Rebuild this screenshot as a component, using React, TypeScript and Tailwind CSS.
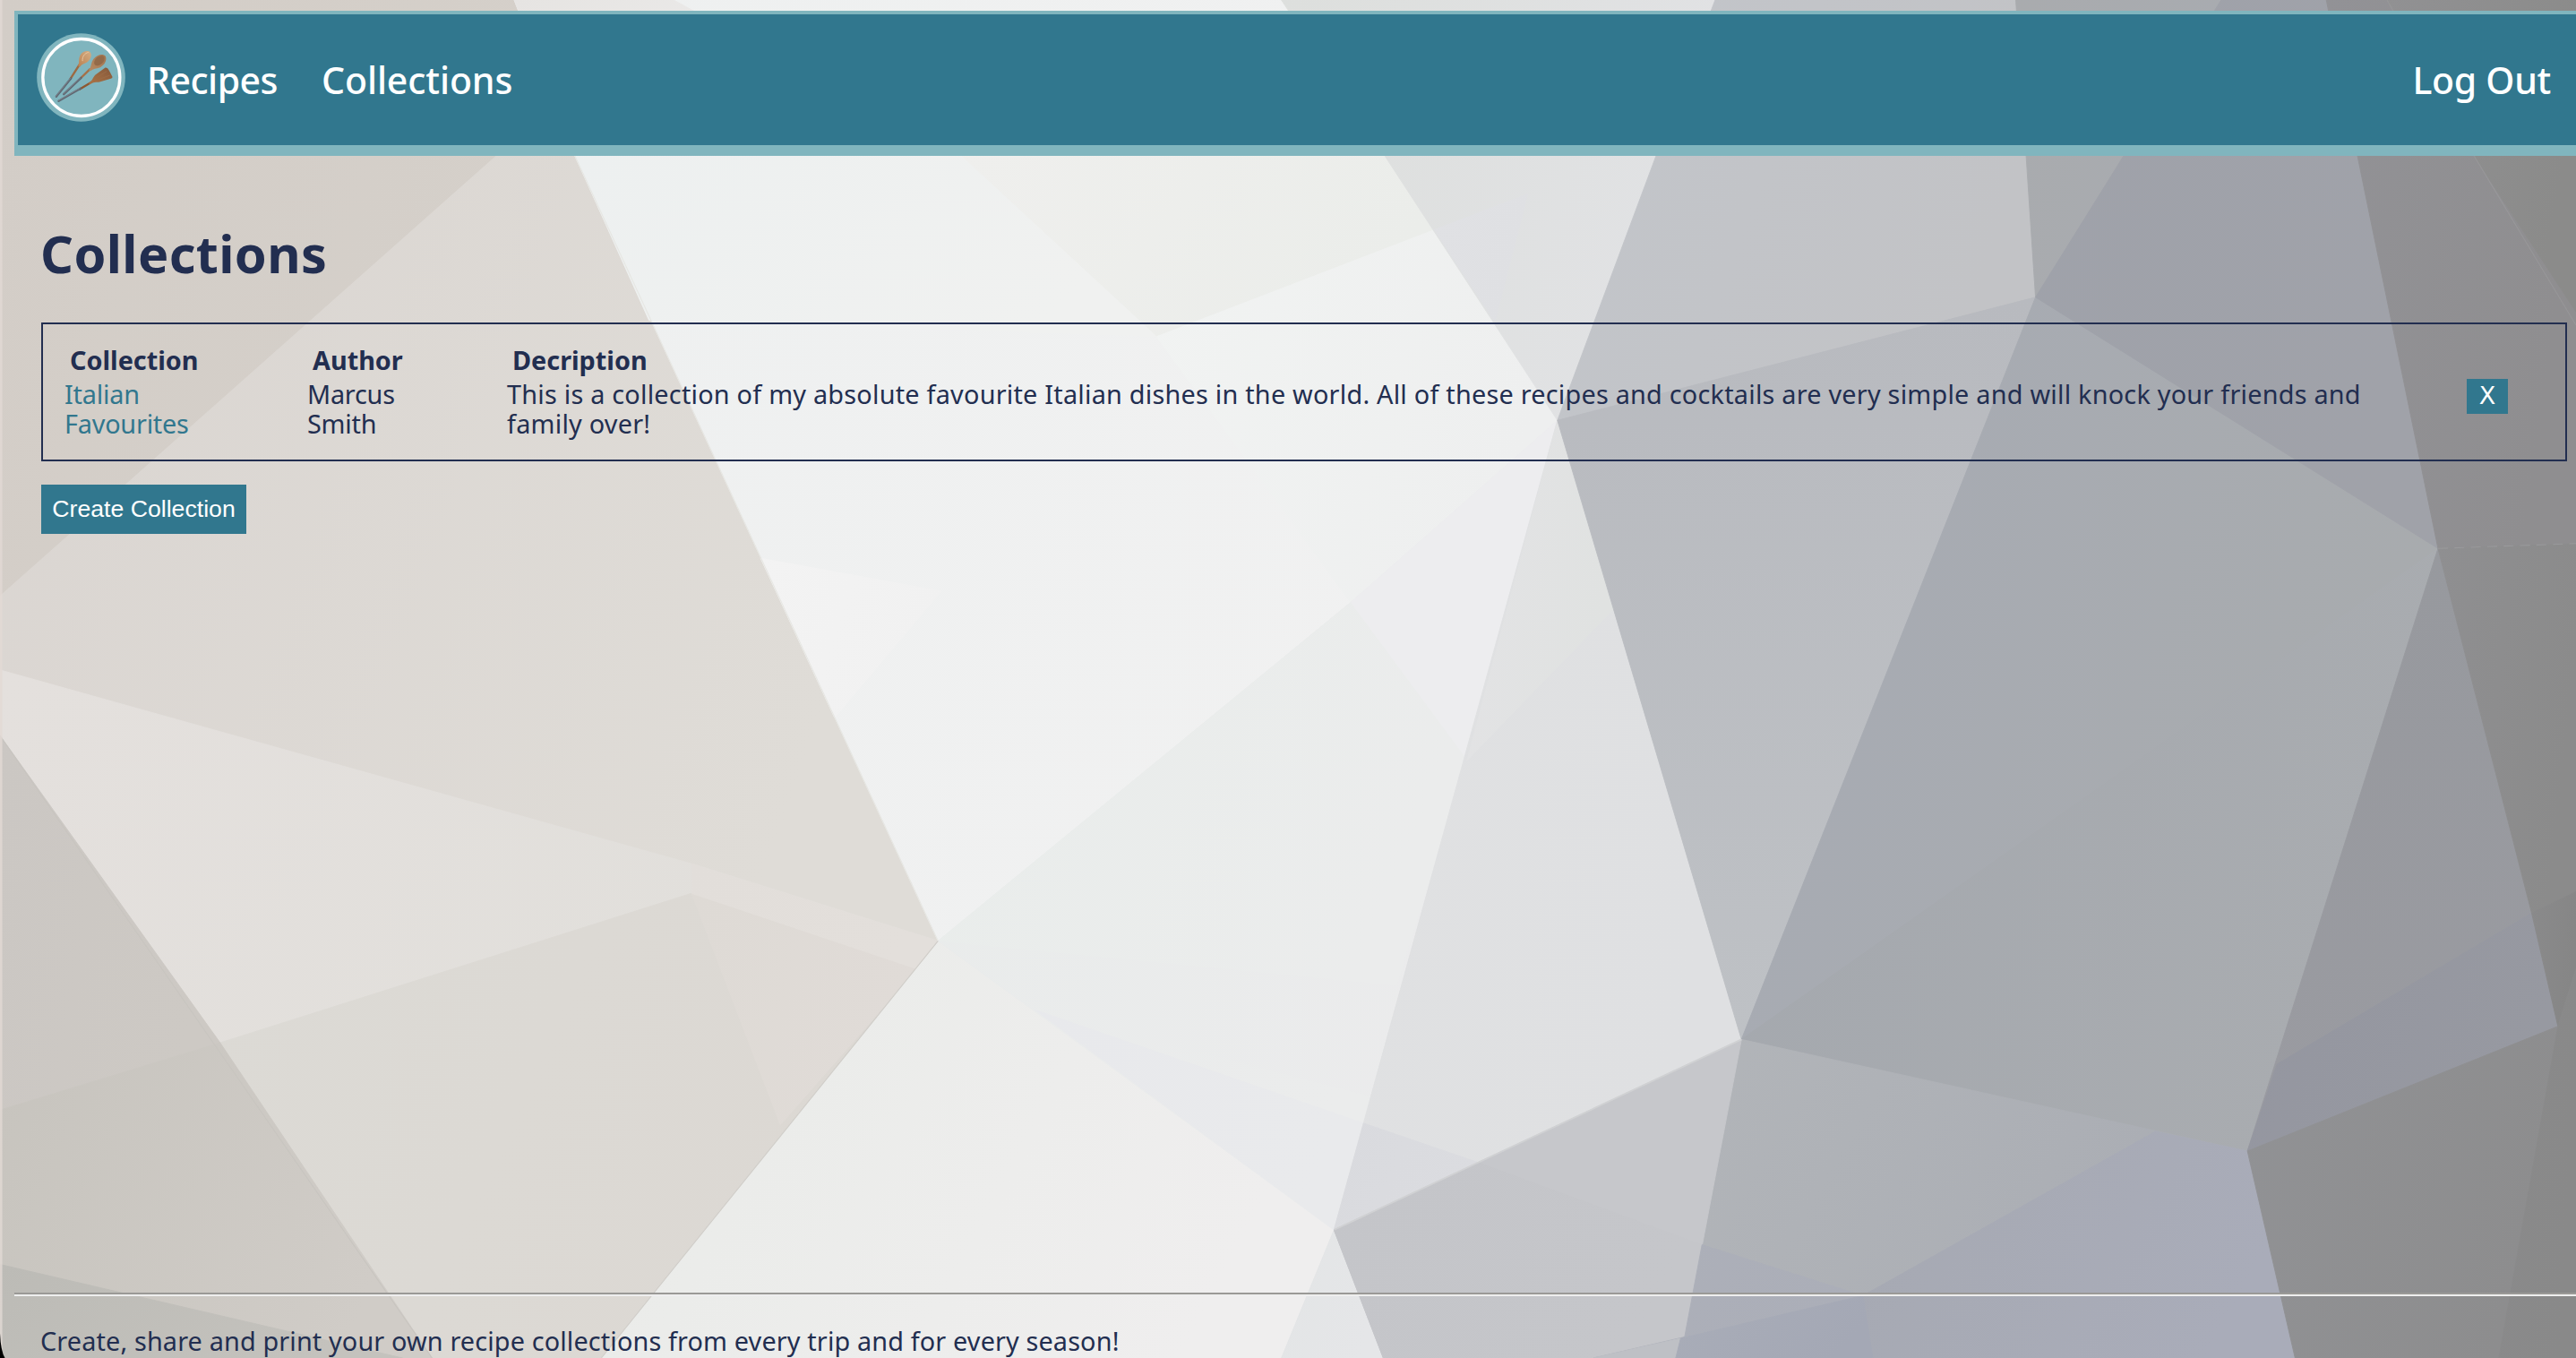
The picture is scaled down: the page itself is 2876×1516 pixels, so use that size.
type Facet = { points: string; from: string; to: string; dir?: "h" | "v" };

const facets: Facet[] = [
  // warm left side
  { points: "0,0 313,0 350,95 302,95 0,363", from: "#d3cdc7", to: "#d5d0ca" },
  { points: "302,95 350,95 571,573 421,526 0,408 0,363", from: "#dad5d1", to: "#dfdcd7" },
  { points: "0,408 421,526 571,573 558,592 421,544 134,635 0,448", from: "#e4e0dd", to: "#e1dfdb" },
  { points: "421,544 571,573 372,827 263,827 134,635", from: "#dcdad5", to: "#dcd8d3" },
  { points: "421,544 560,588 475,685", from: "#dedad5", to: "#e0dbd7" },
  { points: "421,526 571,573 558,590 421,544", from: "#e2deda", to: "#e3dfdb" },
  { points: "0,448 134,635 0,676", from: "#cbc7c3", to: "#cdc9c4" },
  { points: "0,676 134,635 263,827 0,827", from: "#c7c4be", to: "#d0ccc7" },
  { points: "0,770 245,827 0,827", from: "#bcbbb6", to: "#c4c2bd" },
  // bright centre
  { points: "313,0 1044,0 1008,95 948,256 822,367 571,573 350,95", from: "#eef0f0", to: "#f1f1f1" },
  { points: "313,0 410,0 585,95 350,95", from: "#e6e4e2", to: "#efefef" },
  { points: "585,95 843,95 873,140 704,205", from: "#efefed", to: "#ebedea" },
  { points: "704,205 873,140 948,256 822,367", from: "#f1f3f2", to: "#eeefef" },
  { points: "350,95 585,95 704,205 395,195", from: "#edf0f0", to: "#f0f1f0" },
  { points: "463,340 573,360 508,437", from: "#f3f3f3", to: "#f1f1f1" },
  { points: "571,573 822,367 948,256 812,749", from: "#e9eceb", to: "#ebebec" },
  { points: "822,367 948,256 893,463", from: "#ededef", to: "#ededef" },
  { points: "571,573 822,367 893,463 850,600", from: "#e9edeb", to: "#ebecec" },
  { points: "571,573 812,749 780,827 366,827", from: "#e9ebe8", to: "#efeeee" },
  { points: "571,573 630,615 835,668 812,749", from: "#e9ebeb", to: "#ebecec" },
  { points: "630,615 830,684 812,749", from: "#e8e9ec", to: "#e9eaec" },
  { points: "812,749 842,827 780,827", from: "#e3e5e6", to: "#e5e6e8" },
  { points: "843,95 780,0 1044,0 1008,95 948,256", from: "#dddfdd", to: "#e1e2e4" },
  { points: "873,140 930,118 910,196", from: "#e0e1e4", to: "#dfe0e3" },
  { points: "948,256 1060,633 812,749", from: "#e0e1e2", to: "#dfe0e2" },
  { points: "948,256 983,370 893,463", from: "#e3e3e5", to: "#e0e2e1" },
  { points: "830,684 900,708 812,749", from: "#d9dade", to: "#dbdce0" },
  // cool greys
  { points: "1044,0 1227,0 1234,95 1239,181 948,256 1008,95", from: "#c2c5ca", to: "#c2c3c6" },
  { points: "1227,0 1334,0 1352,0 1292,95 1239,181", from: "#a9abae", to: "#a8abb0" },
  { points: "948,256 1239,181 1060,633", from: "#b8babf", to: "#bec1c5", dir: "v" },
  { points: "1239,181 1484,334 1060,633", from: "#a7abb4", to: "#a8abae" },
  { points: "1239,181 1352,0 1416,0 1435,95 1484,334", from: "#9fa2aa", to: "#a0a2a9" },
  { points: "1060,633 1484,334 1368,701", from: "#a4a8ae", to: "#a9acb0" },
  { points: "1060,633 1368,701 1397,827 1023,827", from: "#b2b5b9", to: "#a9acb3" },
  { points: "1134,789 1312,689 1368,701 1397,827 1140,827", from: "#a6a9b2", to: "#a9acb9" },
  { points: "812,749 1060,633 1023,827 842,827", from: "#c6c7cb", to: "#c6c7cb" },
  { points: "812,749 900,708 1036,758 1023,827 842,827", from: "#c4c5c9", to: "#c5c6ca" },
  { points: "1036,758 1134,789 970,827 1023,827", from: "#adb0b9", to: "#abaeb8" },
  { points: "970,827 1023,815 1023,827", from: "#bec0c5", to: "#bec0c5" },
  { points: "1023,815 1134,789 1140,827 1020,827", from: "#a9adb8", to: "#a4a8b5" },
  // dark right edge
  { points: "1416,0 1568,0 1568,331 1484,334 1435,95", from: "#929296", to: "#8f8e90" },
  { points: "1453,0 1568,0 1568,190 1506,95", from: "#919193", to: "#8b8b8a" },
  { points: "1484,334 1541,556 1557,625 1368,701", from: "#97999e", to: "#9a9ba1", dir: "v" },
  { points: "1386,648 1541,556 1557,625 1368,701", from: "#9496a0", to: "#9799a1" },
  { points: "1484,334 1568,331 1568,543 1541,556", from: "#8f8f91", to: "#8b8b8b" },
  { points: "1541,556 1568,543 1568,590 1557,625", from: "#8a8a8b", to: "#868686" },
  { points: "1368,701 1557,625 1521,827 1397,827", from: "#919295", to: "#8d8d8e" },
  { points: "1557,625 1568,590 1568,827 1521,827", from: "#8a8a8b", to: "#898989" },
];

function Backdrop() {
  return (
    <svg className="absolute inset-0 h-full w-full" viewBox="0 0 1568 827" preserveAspectRatio="none" aria-hidden="true">
      <defs>
        {facets.map((f, i) => (
          <linearGradient key={i} id={`facet-${i}`} x1="0" y1="0" x2={f.dir === "v" ? "0" : "1"} y2={f.dir === "v" ? "1" : "0.3"}>
            <stop offset="0" stopColor={f.from} />
            <stop offset="1" stopColor={f.to} />
          </linearGradient>
        ))}
      </defs>
      <rect width="780" height="827" fill="#dcdad6" />
      <rect x="780" width="788" height="827" fill="#a4a5a9" />
      {facets.map((f, i) => (
        <polygon key={i} points={f.points} fill={`url(#facet-${i})`} stroke={`url(#facet-${i})`} strokeWidth="0.5" />
      ))}
      <g fill="none" strokeWidth="0.6">
        <path d="M571 573L366 827" stroke="#cfccc7" />
        <path d="M350 95L571 573" stroke="#e6e6e2" />
        <path d="M1060 633L812 749" stroke="#d0d1d3" strokeWidth="1" />
        <path d="M0 448L263 827" stroke="#c8c5c0" />
        <path d="M1484 334L1568 331" stroke="#99999b" strokeDasharray="6 4" />
        <path d="M1453 0L1506 95L1568 198" stroke="#9c9c9e" strokeOpacity="0.6" />
        <path d="M0.7 0V827" stroke="#e2d9d4" strokeWidth="1.4" strokeOpacity="0.8" />
      </g>
      <path d="M0 812Q0.5 823 3 827H0Z" fill="#000" />
    </svg>
  );
}

function Logo() {
  return (
    <svg className="mb-1.5 size-[99px]" viewBox="31.5 34.5 297 297" role="img" aria-label="Wooden spoons">
      <defs>
        <linearGradient id="wood-a" x1="1" y1="0" x2="0" y2="1">
          <stop offset="0" stopColor="#d6ae84" />
          <stop offset="1" stopColor="#b98152" />
        </linearGradient>
        <linearGradient id="wood-b" x1="1" y1="0" x2="0" y2="1">
          <stop offset="0" stopColor="#a0744f" />
          <stop offset="1" stopColor="#b88a62" />
        </linearGradient>
        <linearGradient id="wood-c" x1="1" y1="0" x2="0" y2="1">
          <stop offset="0" stopColor="#84583a" />
          <stop offset="1" stopColor="#ac7446" />
        </linearGradient>
      </defs>
      <circle cx="180" cy="183" r="148" fill="#80b5be" />
      <circle cx="181" cy="183" r="129" fill="none" stroke="#fff" strokeWidth="10" />
      <g strokeLinecap="round" fill="none">
        <path d="M174 141L144 188" stroke="#9c6a42" strokeWidth="7" />
        <path d="M146 186L97 247" stroke="#5d6670" strokeWidth="7" />
        <path d="M144 186L96 246" stroke="#8b929c" strokeWidth="2" />
        <path d="M210 155L178 186" stroke="#a57047" strokeWidth="7" />
        <path d="M180 184L122 239" stroke="#5d6670" strokeWidth="7" />
        <path d="M178 184L121 238" stroke="#8b929c" strokeWidth="2" />
        <path d="M216 198L176 222" stroke="#8d5831" strokeWidth="7" />
        <path d="M178 220L105 262" stroke="#5d6670" strokeWidth="7" />
        <path d="M176 219L105 260" stroke="#8b929c" strokeWidth="2" />
      </g>
      <path d="M170 144C176 132 170 120 178 107C186 95 203 91 211 99C218 110 211 125 200 132C188 138 182 139 176 148Z" fill="url(#wood-a)" />
      <path d="M185 128C183 114 192 101 205 99" stroke="#e8c69f" strokeWidth="3" fill="none" />
      <path d="M206 158C216 148 212 134 222 121C234 106 254 102 262 112C268 126 258 142 244 149C230 154 222 152 211 162Z" fill="url(#wood-b)" />
      <ellipse cx="241" cy="127" rx="20" ry="13" transform="rotate(-42 241 127)" fill="#936a49" />
      <path d="M206 202C220 192 218 184 228 174L261 150Q269 149 274 160L285 181Q286 186 280 187L242 198C230 200 222 197 209 206Z" fill="url(#wood-c)" />
      <path d="M232 184L266 162M238 190L276 176" stroke="#9a6c48" strokeWidth="3" fill="none" />
    </svg>
  );
}

export default function App() {
  return (
    <div className="relative h-[1516px] w-full overflow-hidden bg-[#d8d5d1] font-['Noto_Sans','Lucida_Grande',sans-serif] text-[28.8px] leading-[33px] text-[#222e50]">
      <Backdrop />
      <div className="relative flex h-full flex-col pt-3">
        <nav className="ml-4 flex h-[162px] shrink-0 items-center border-t-4 border-b-12 border-l-4 border-[#80b5be] bg-[#31778e] pr-7 pl-[21px] text-[41px] font-medium tracking-[-0.3px] text-white">
          <Logo />
          <a className="ml-6 tracking-[-0.5px]">Recipes</a>
          <a className="ml-[49px] tracking-[-0.1px]">Collections</a>
          <a className="ml-auto">Log Out</a>
        </nav>

        <main className="flex grow flex-col items-start pr-2.5 pl-[46px]">
          <h1 className="mt-[77px] -ml-px text-[57.6px] leading-[64px] font-bold tracking-[0.4px]">Collections</h1>

          <section className="mt-[45px] h-[155px] w-full border-2 border-[#222e50] pt-[21px] pl-6">
            <div className="grid grid-cols-[271px_223px_1fr] leading-[37px] font-bold">
              <span className="pl-1.5">Collection</span>
              <span className="pl-1.5">Author</span>
              <span className="pl-1.5">Decription</span>
            </div>
            <div className="mt-[3px] grid grid-cols-[271px_223px_2188px_auto] justify-start tracking-[0.24px]">
              <a className="w-[160px] tracking-[-0.2px] text-[#31778e]">Italian Favourites</a>
              <span className="w-[120px] tracking-[-0.2px]">Marcus Smith</span>
              <p className="pr-[70px]">
                This is a collection of my absolute favourite Italian dishes in the world. All of these recipes and cocktails are
                very simple and will knock your friends and family over!
              </p>
              <button className="flex h-[39px] w-[46px] items-center justify-center bg-[#31778e] pb-0.5 font-['DejaVu_Sans',sans-serif] text-[27px] text-white">
                X
              </button>
            </div>
          </section>

          <button className="mt-[26px] h-[55px] w-[229px] bg-[#31778e] font-['Liberation_Sans',Arial,sans-serif] text-[26.67px] leading-[31px] whitespace-nowrap text-white">
            Create Collection
          </button>
        </main>

        <footer className="ml-4 h-[73px] shrink-0">
          <div className="h-1 border-t-2 border-b-2 border-t-[#9a9996] border-b-[#eeeeee]" />
          <p className="pt-[33px] pl-[29px] tracking-[0.15px]">
            Create, share and print your own recipe collections from every trip and for every season!
          </p>
        </footer>
      </div>
    </div>
  );
}
